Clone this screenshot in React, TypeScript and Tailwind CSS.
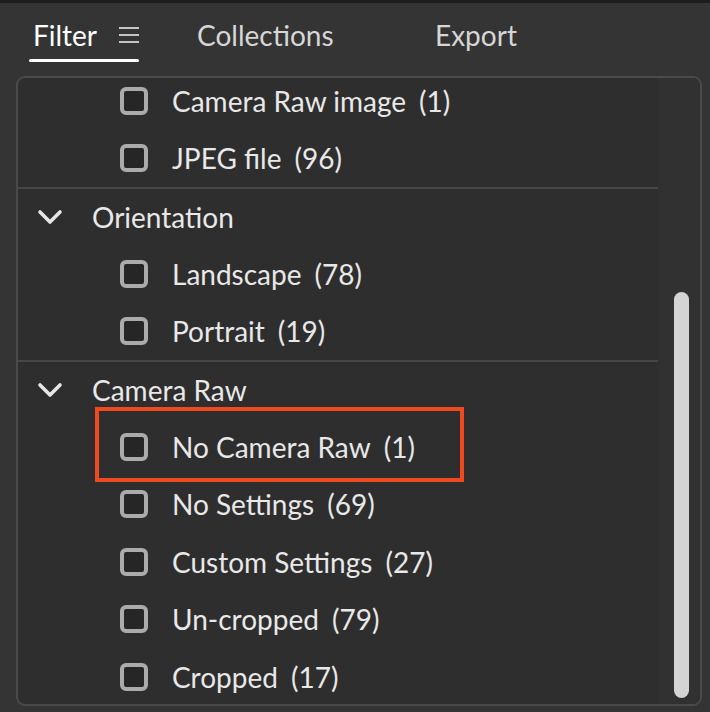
import React from "react";

type Row =
  | { kind: "item"; label: string; count: number }
  | { kind: "heading"; label: string }
  | { kind: "sep" };

const rows: Row[] = [
  { kind: "item", label: "Camera Raw image", count: 1 },
  { kind: "item", label: "JPEG file", count: 96 },
  { kind: "sep" },
  { kind: "heading", label: "Orientation" },
  { kind: "item", label: "Landscape", count: 78 },
  { kind: "item", label: "Portrait", count: 19 },
  { kind: "sep" },
  { kind: "heading", label: "Camera Raw" },
  { kind: "item", label: "No Camera Raw", count: 1 },
  { kind: "item", label: "No Settings", count: 69 },
  { kind: "item", label: "Custom Settings", count: 27 },
  { kind: "item", label: "Un-cropped", count: 79 },
  { kind: "item", label: "Cropped", count: 17 },
];

function Chevron() {
  return (
    <svg width="26" height="16" viewBox="0 0 26 16" fill="none">
      <polyline
        points="3,3 13,13 23,3"
        stroke="#e6e6e6"
        strokeWidth="3.6"
        strokeLinecap="round"
        strokeLinejoin="round"
      />
    </svg>
  );
}

function MenuIcon() {
  return (
    <svg width="20" height="18" viewBox="0 0 20 18" fill="none">
      <line x1="0" y1="2" x2="20" y2="2" stroke="#c4c4c4" strokeWidth="2" />
      <line x1="0" y1="9" x2="20" y2="9" stroke="#c4c4c4" strokeWidth="2" />
      <line x1="0" y1="16" x2="20" y2="16" stroke="#c4c4c4" strokeWidth="2" />
    </svg>
  );
}

function FilterRow({ row }: { row: Row }) {
  if (row.kind === "sep") {
    return <div className="h-[2px] bg-[#464646]" />;
  }
  if (row.kind === "heading") {
    return (
      <div className="flex h-[56px] items-center pl-[19px]">
        <Chevron />
        <span className="ml-[29px]">{row.label}</span>
      </div>
    );
  }
  return (
    <div className="flex h-[57.5px] items-center pl-[102px]">
      <div className="h-[28px] w-[28px] rounded-[6px] border-4 border-[#ababab] bg-[#262626]" />
      <span className="ml-[24px]">{row.label}</span>
      <span className="ml-[13px]">({row.count})</span>
    </div>
  );
}

export default function App() {
  return (
    <div
      className="relative flex h-[712px] w-[710px] flex-col overflow-hidden bg-[#343434] text-[28px] text-[#e8e8e8]"
      style={{ fontFamily: "Lato, 'Open Sans', sans-serif" }}
    >
      <div className="h-[3px] bg-[#1c1c1c]" />

      <div className="flex h-[73px] items-start pl-[29px] pt-[13px]">
        <div className="flex w-[110px] flex-col">
          <div className="flex h-[38px] items-center pl-[4px]">
            <span className="text-white">Filter</span>
            <span className="ml-auto">
              <MenuIcon />
            </span>
          </div>
          <div className="mt-[5px] h-[3px] rounded-full bg-white" />
        </div>
        <div className="ml-[58px] flex h-[38px] w-[238px] items-center text-[#d6d6d6]">
          Collections
        </div>
        <div className="flex h-[38px] items-center text-[#d6d6d6]">Export</div>
      </div>

      <div className="ml-[16px] flex h-[630px] w-[686px] overflow-hidden rounded-[9px] border-2 border-[#4a4a4a] bg-[#2e2e2e]">
        <div className="w-[640px] overflow-hidden">
          <div className="-mt-[6px]">
            {rows.map((row, i) => (
              <FilterRow key={i} row={row} />
            ))}
          </div>
        </div>
        <div className="flex-1 bg-[#313131]">
          <div className="ml-[16px] mt-[214px] h-[406px] w-[15px] rounded-full bg-[#d4d4d4]" />
        </div>
      </div>

      <div className="absolute left-[95px] top-[407px] h-[75px] w-[369px] border-4 border-[#f0491f]" />
    </div>
  );
}
